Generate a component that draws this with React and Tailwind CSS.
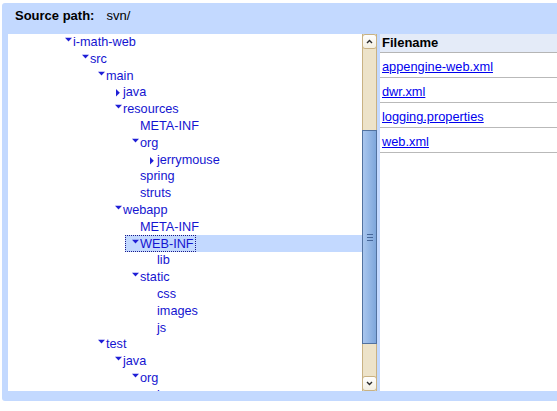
import React from 'react';

const tree = [
  { level: 0, name: 'i-math-web', arrow: 'down' },
  { level: 1, name: 'src', arrow: 'down' },
  { level: 2, name: 'main', arrow: 'down' },
  { level: 3, name: 'java', arrow: 'right' },
  { level: 3, name: 'resources', arrow: 'down' },
  { level: 4, name: 'META-INF' },
  { level: 4, name: 'org', arrow: 'down' },
  { level: 5, name: 'jerrymouse', arrow: 'right' },
  { level: 4, name: 'spring' },
  { level: 4, name: 'struts' },
  { level: 3, name: 'webapp', arrow: 'down' },
  { level: 4, name: 'META-INF' },
  { level: 4, name: 'WEB-INF', arrow: 'down', selected: true },
  { level: 5, name: 'lib' },
  { level: 4, name: 'static', arrow: 'down' },
  { level: 5, name: 'css' },
  { level: 5, name: 'images' },
  { level: 5, name: 'js' },
  { level: 2, name: 'test', arrow: 'down' },
  { level: 3, name: 'java', arrow: 'down' },
  { level: 4, name: 'org', arrow: 'down' },
  { level: 5, name: 'jerrymouse' },
];

// full class names per depth, so tailwind picks them up
const indent = ['pl-[57px]', 'pl-[74px]', 'pl-[90px]', 'pl-[107px]', 'pl-[124px]', 'pl-[141px]'];
const selIndent = ['pl-[50px]', 'pl-[67px]', 'pl-[83px]', 'pl-[100px]', 'pl-[117px]', 'pl-[134px]'];

const files = ['appengine-web.xml', 'dwr.xml', 'logging.properties', 'web.xml'];

function Arrow({ dir }) {
  if (!dir) return <span className="w-[8px] shrink-0" />;
  return (
    <svg width="8" height="16" viewBox="0 0 8 16" className="shrink-0">
      {dir === 'down' ? (
        <polygon points="0,3.8 7,3.8 3.5,7.5" fill="#1f1fd6" />
      ) : (
        <polygon points="1,5 4.8,8.8 1,12.6" fill="#1f1fd6" />
      )}
    </svg>
  );
}

function TreeRow({ node }) {
  if (node.selected) {
    return (
      <div className={`flex h-[16.8px] shrink-0 ${selIndent[node.level]}`}>
        <div className="flex-1 flex bg-[#c3d9ff] -mt-[1px] h-[17px]">
          <div className="flex h-[17px] border border-dotted border-[#1a1a8a] pl-[6px] pr-[1px]">
            <Arrow dir={node.arrow} />
            <span className="-mt-[0px]">{node.name}</span>
          </div>
        </div>
      </div>
    );
  }
  return (
    <div className={`flex h-[16.8px] shrink-0 ${indent[node.level]}`}>
      <Arrow dir={node.arrow} />
      <span>{node.name}</span>
    </div>
  );
}

function Scrollbar() {
  return (
    <div className="w-[15px] flex flex-col bg-[#ede3c9] border-x border-[#c9b283]">
      <div className="h-[15px] shrink-0 -mx-[1px] flex items-center justify-center rounded-[3px] border border-[#c9b283] bg-gradient-to-b from-white to-[#f3efe2]">
        <svg width="7" height="5" viewBox="0 0 7 5">
          <path d="M1 4 L3.5 1.5 L6 4" stroke="#2a2a2a" strokeWidth="1.4" fill="none" />
        </svg>
      </div>
      <div className="flex-1 min-h-0 flex flex-col">
        <div className="h-[81px] shrink-0" />
        <div className="h-[214px] shrink-0 -mx-[1px] flex items-center justify-center border border-[#52729f] bg-gradient-to-r from-[#a9c6ee] to-[#7ea7dc]">
          <svg width="6" height="7" viewBox="0 0 6 7">
            <rect x="0" y="0" width="6" height="1" fill="#46679a" />
            <rect x="0" y="3" width="6" height="1" fill="#46679a" />
            <rect x="0" y="6" width="6" height="1" fill="#46679a" />
          </svg>
        </div>
      </div>
      <div className="h-[15px] shrink-0 -mx-[1px] flex items-center justify-center rounded-[3px] border border-[#c9b283] bg-gradient-to-b from-white to-[#f3efe2]">
        <svg width="7" height="5" viewBox="0 0 7 5">
          <path d="M1 1 L3.5 3.5 L6 1" stroke="#2a2a2a" strokeWidth="1.4" fill="none" />
        </svg>
      </div>
    </div>
  );
}

export default function App() {
  return (
    <div className="w-[557px] h-[411px] bg-white pt-[3px] pl-[2px] font-['Liberation_Sans',Arial,sans-serif] overflow-hidden">
      <div className="h-[398px] bg-[#c3d9ff] rounded-l-[3px] flex flex-col">
        {/* Header */}
        <div className="h-[31px] shrink-0 pl-[13px] pt-[4px] text-[13px] leading-[17px] text-black flex">
          <span className="font-bold">Source path:</span>
          <span className="ml-[12px]">svn/</span>
        </div>

        {/* Body */}
        <div className="flex-1 min-h-0 flex pl-[6px] pb-[10px]">
          <div className="w-[354px] bg-white overflow-hidden flex flex-col text-[12.7px] leading-[16.8px] text-[#1414d0]">
            {tree.map((node, i) => (
              <TreeRow key={i} node={node} />
            ))}
          </div>

          <Scrollbar />

          <div className="flex-1 ml-[3px] bg-white text-[12.8px]">
            <div className="h-[19px] pl-[2px] bg-[#e4ebf8] border-b border-[#b5b5b5] font-bold text-black leading-[18px] text-[13px]">
              Filename
            </div>
            {files.map((f) => (
              <div key={f} className="h-[25px] pl-[2px] pt-[5px] leading-[17px] border-b border-[#b9b9b9]">
                <a href="#" className="text-[#0000ee] underline">{f}</a>
              </div>
            ))}
          </div>
        </div>
      </div>
    </div>
  );
}
